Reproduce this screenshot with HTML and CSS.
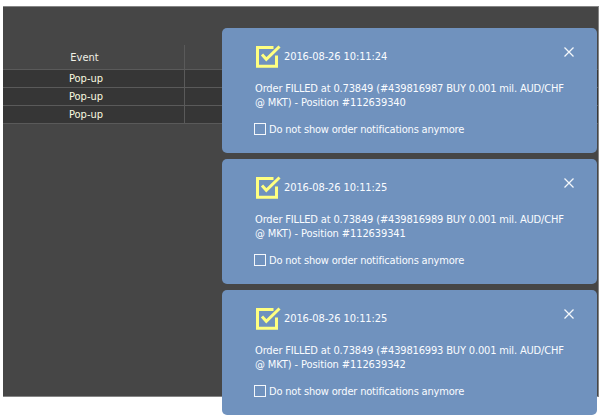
FILE: index.html
```html
<!DOCTYPE html>
<html lang="en">
<head>
    <meta charset="UTF-8">
    <title>Order notifications</title>
    <link rel="stylesheet" href="styles.css">
</head>
<body>
    <div class="window">
        <table class="events">
            <thead>
                <tr><th>Event</th><th></th></tr>
            </thead>
            <tbody>
                <tr><td>Pop-up</td><td></td></tr>
                <tr><td>Pop-up</td><td></td></tr>
                <tr><td>Pop-up</td><td></td></tr>
            </tbody>
        </table>
    </div>

    <!-- notifications are stacked over the window -->
    <div class="notifications">
        <div class="toast">
            <div class="toast-header">
                <svg class="check-icon" width="25" height="24" viewBox="0 0 25 24">
                    <path d="M17.500 2.500H1.500V21.200H20.500V10.500"/>
                    <path d="M6 9.500L10.300 14.300L23.500 1.500"/>
                </svg>
                <span class="date">2016-08-26 10:11:24</span>
                <svg class="close" width="10" height="10" viewBox="0 0 10 10">
                    <path d="M0.500 0.500L9.500 9.500M9.500 0.500L0.500 9.500"/>
                </svg>
            </div>
            <p class="message"><span class="line-1">Order FILLED at 0.73849 (#439816987 BUY 0.001 mil. AUD/CHF</span><br>@ MKT) - Position #112639340</p>
            <label class="option"><span class="checkbox"></span>Do not show order notifications anymore</label>
        </div>

        <div class="toast">
            <div class="toast-header">
                <svg class="check-icon" width="25" height="24" viewBox="0 0 25 24">
                    <path d="M17.500 2.500H1.500V21.200H20.500V10.500"/>
                    <path d="M6 9.500L10.300 14.300L23.500 1.500"/>
                </svg>
                <span class="date">2016-08-26 10:11:25</span>
                <svg class="close" width="10" height="10" viewBox="0 0 10 10">
                    <path d="M0.500 0.500L9.500 9.500M9.500 0.500L0.500 9.500"/>
                </svg>
            </div>
            <p class="message"><span class="line-1">Order FILLED at 0.73849 (#439816989 BUY 0.001 mil. AUD/CHF</span><br>@ MKT) - Position #112639341</p>
            <label class="option"><span class="checkbox"></span>Do not show order notifications anymore</label>
        </div>

        <div class="toast">
            <div class="toast-header">
                <svg class="check-icon" width="25" height="24" viewBox="0 0 25 24">
                    <path d="M17.500 2.500H1.500V21.200H20.500V10.500"/>
                    <path d="M6 9.500L10.300 14.300L23.500 1.500"/>
                </svg>
                <span class="date">2016-08-26 10:11:25</span>
                <svg class="close" width="10" height="10" viewBox="0 0 10 10">
                    <path d="M0.500 0.500L9.500 9.500M9.500 0.500L0.500 9.500"/>
                </svg>
            </div>
            <p class="message"><span class="line-1">Order FILLED at 0.73849 (#439816993 BUY 0.001 mil. AUD/CHF</span><br>@ MKT) - Position #112639342</p>
            <label class="option"><span class="checkbox"></span>Do not show order notifications anymore</label>
        </div>
    </div>
</body>
</html>
```

FILE: styles.css
```css
* {
    margin: 0;
    padding: 0;
    box-sizing: border-box;
}

body {
    height: 419px;
    padding: 6px 0 0 3px;
    background: #fff;
    font-family: Tahoma, "DejaVu Sans Condensed", "DejaVu Sans", sans-serif;
    font-size: 11px;
    overflow: hidden;
}

.window {
    width: 596px;
    height: 391px;
    padding-top: 38px;
    background: #464646;
    border: 1px solid #858585;
    border-left: none;
}

.events {
    width: 100%;
    table-layout: fixed;
    border-collapse: separate;
    border-spacing: 0;
    color: #f0f0e6;
}

.events th,
.events td {
    height: 18px;
    line-height: 17px;
    border-bottom: 1px solid #5a5a5a;
    text-align: center;
    font-weight: normal;
}

.events th {
    height: 25px;
}

.events td {
    background: #363636;
    color: #fafae0;
}

.events th:first-child,
.events td:first-child {
    width: 182px;
    border-right: 1px solid #5a5a5a;
    padding-right: 18px;
}

.events td:first-child {
    padding-right: 15px;
}

.notifications {
    position: absolute;
    top: 28px;
    left: 222px;
    width: 375px;
    display: flex;
    flex-direction: column;
    gap: 6px;
}

.toast {
    height: 125px;
    padding: 17px 23px 0 32px;
    border-radius: 5px;
    background: #7092be;
    color: #fafcff;
}

.toast-header {
    display: flex;
    height: 24px;
}

.check-icon {
    margin-left: 2px;
    fill: none;
    stroke: #ffff80;
    stroke-width: 3;
}

.date {
    margin-left: 3px;
    line-height: 24px;
    letter-spacing: -0.1px;
}

.close {
    margin: 2px 0 0 auto;
    fill: none;
    stroke: #f4f7fb;
    stroke-width: 1.3;
}

.message {
    margin: 13px 0 0 1px;
    line-height: 14px;
    white-space: nowrap;
    letter-spacing: -0.1px;
}

.line-1 {
    letter-spacing: -0.16px;
}

.option {
    display: flex;
    align-items: center;
    gap: 3px;
    height: 12px;
    margin-top: 13px;
    letter-spacing: -0.18px;
}

.checkbox {
    width: 12px;
    height: 12px;
    border: 1px solid #f4f7fb;
}
```
